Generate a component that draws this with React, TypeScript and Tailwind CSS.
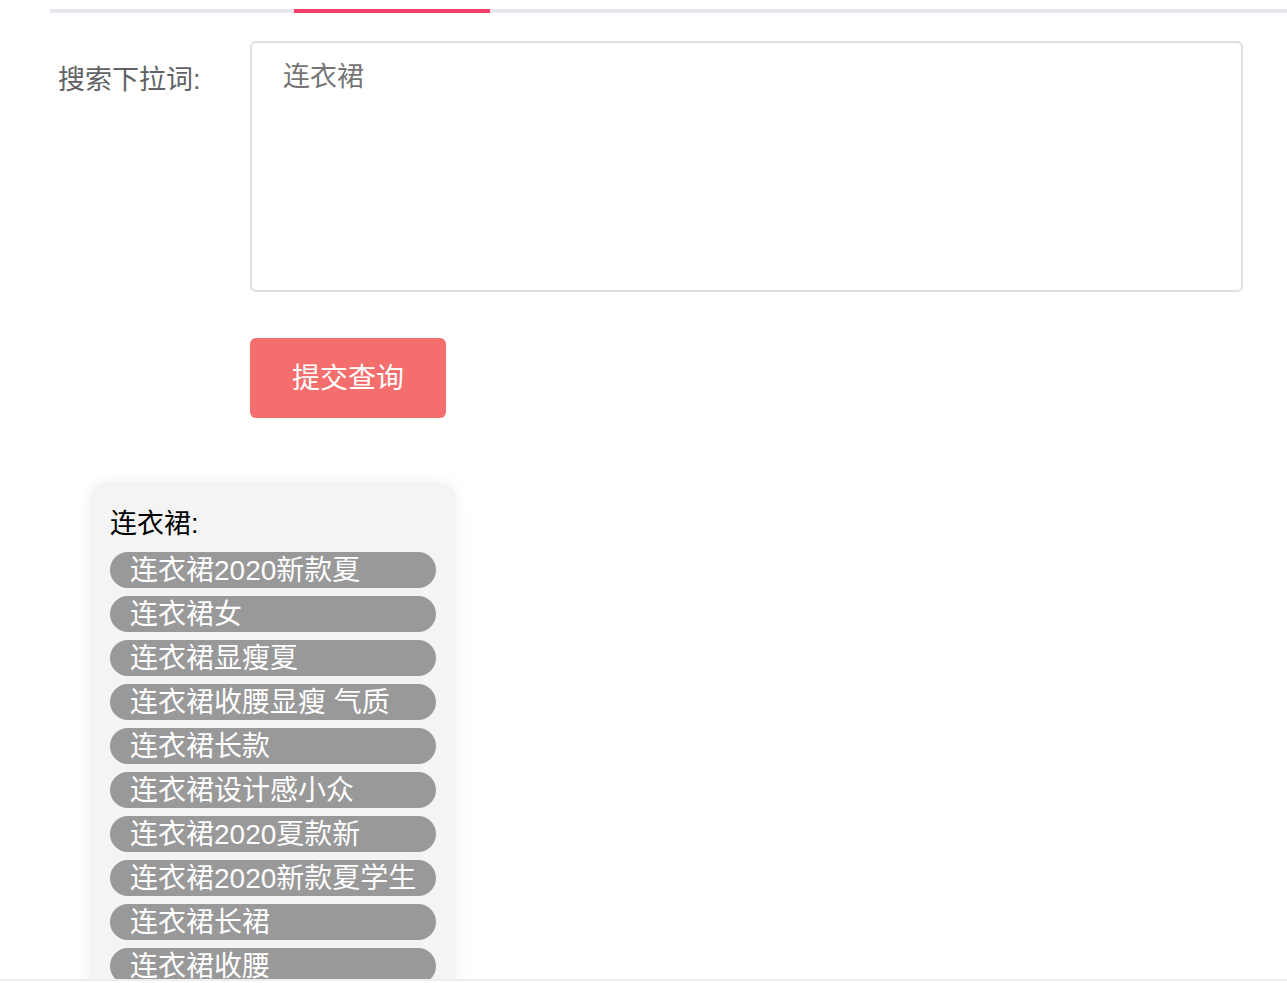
import React from 'react';

const suggestions = [
  '连衣裙2020新款夏',
  '连衣裙女',
  '连衣裙显瘦夏',
  '连衣裙收腰显瘦 气质',
  '连衣裙长款',
  '连衣裙设计感小众',
  '连衣裙2020夏款新',
  '连衣裙2020新款夏学生',
  '连衣裙长裙',
  '连衣裙收腰',
];

const sans = "font-['Liberation_Sans','Noto_Sans_CJK_SC',sans-serif]";

export default function App() {
  return (
    <div className={`h-[983px] overflow-hidden bg-white ${sans}`}>
      <div className="h-[981px] overflow-hidden border-b-2 border-[#eeeeee] pt-[9px]">
        {/* Tabs underline */}
        <div className="ml-[50px] flex h-[4px] bg-[#e4e7ed]">
          <div className="ml-[244px] w-[196px] bg-[#f43f68]" />
        </div>

        {/* Form */}
        <div className="mt-[28px] flex">
          <label className="w-[250px] shrink-0 whitespace-nowrap pl-[58px] pt-[23px] text-[27px] leading-[32px] text-[#606266]">
            搜索下拉词:
          </label>
          <textarea
            placeholder="连衣裙"
            className="h-[251px] w-[993px] resize-none rounded-[6px] border-2 border-[#dcdfe6] px-[31px] py-[14px] text-[27px] leading-[40px] outline-none placeholder:text-[#757575] font-['Liberation_Serif','Noto_Sans_CJK_SC',serif]"
          />
        </div>

        <div className="ml-[250px] mt-[46px]">
          <button className="h-[80px] w-[196px] rounded-[6px] bg-[#f56e6e] pt-[2px] text-[28px] text-white font-['Liberation_Serif','Noto_Sans_CJK_SC',serif]">
            提交查询
          </button>
        </div>

        {/* Suggestion card */}
        <div className="ml-[90px] mt-[64px] w-[366px] rounded-[18px] bg-[#f4f4f4] px-[20px] pb-[20px] pt-[24px] shadow-[0_0_16px_rgba(0,0,0,0.06)]">
          <div className="text-[27px] leading-[36px] text-black">连衣裙:</div>
          <div className="mt-[10px] flex flex-col gap-[8px]">
            {suggestions.map((s) => (
              <div
                key={s}
                className="h-[36px] whitespace-nowrap rounded-full bg-[#999999] pl-[20px] pt-[1px] text-[28px] leading-[36px] text-white"
              >
                {s}
              </div>
            ))}
          </div>
        </div>
      </div>
    </div>
  );
}
